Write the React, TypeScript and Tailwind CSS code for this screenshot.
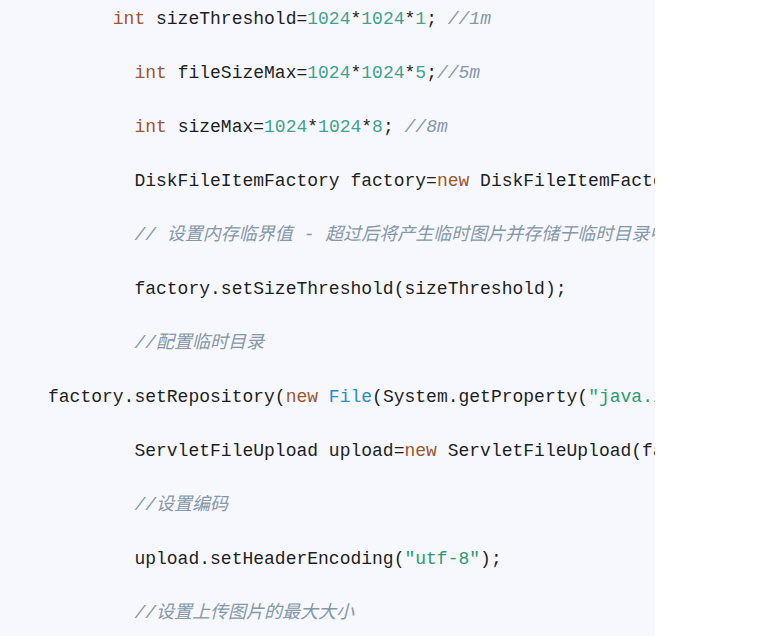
const kw = "text-[#a0552f]"
const num = "text-[#3fa28c]"
const cls = "text-[#2a8cc6]"
const str = "text-[#2a9b6f]"
const cmt = "text-[#8597a8] italic"

type Tok = [string, string?]

const lines: Tok[][] = [
  [["      "], ["int", kw], [" sizeThreshold="], ["1024", num], ["*"], ["1024", num], ["*"], ["1", num], ["; "], ["//1m", cmt]],
  [["        "], ["int", kw], [" fileSizeMax="], ["1024", num], ["*"], ["1024", num], ["*"], ["5", num], [";"], ["//5m", cmt]],
  [["        "], ["int", kw], [" sizeMax="], ["1024", num], ["*"], ["1024", num], ["*"], ["8", num], ["; "], ["//8m", cmt]],
  [["        DiskFileItemFactory factory="], ["new", kw], [" DiskFileItemFactory();"]],
  [["        "], ["// 设置内存临界值 - 超过后将产生临时图片并存储于临时目录中", cmt]],
  [["        factory.setSizeThreshold(sizeThreshold);"]],
  [["        "], ["//配置临时目录", cmt]],
  [["factory.setRepository("], ["new", kw], [" "], ["File", cls], ["(System.getProperty("], ["\"java.io.tmpdir\"", str], [")));"]],
  [["        ServletFileUpload upload="], ["new", kw], [" ServletFileUpload(factory);"]],
  [["        "], ["//设置编码", cmt]],
  [["        upload.setHeaderEncoding("], ["\"utf-8\"", str], [");"]],
  [["        "], ["//设置上传图片的最大大小", cmt]],
]

export default function App() {
  return (
    <div className="h-[636px] w-full bg-white overflow-hidden">
      <div
        className="w-[655px] h-full bg-[#f7f8fd] overflow-hidden pl-[48px] pt-px flex flex-col gap-[18px] text-[18px] leading-[36px] text-[#1e1e1e]"
        style={{ fontFamily: '"Liberation Mono", "Noto Sans CJK SC", monospace' }}
      >
        {lines.map((line, i) => (
          <div key={i} className="whitespace-pre">
            {line.map(([text, c], j) => (
              <span key={j} className={c}>
                {text}
              </span>
            ))}
          </div>
        ))}
      </div>
    </div>
  )
}
